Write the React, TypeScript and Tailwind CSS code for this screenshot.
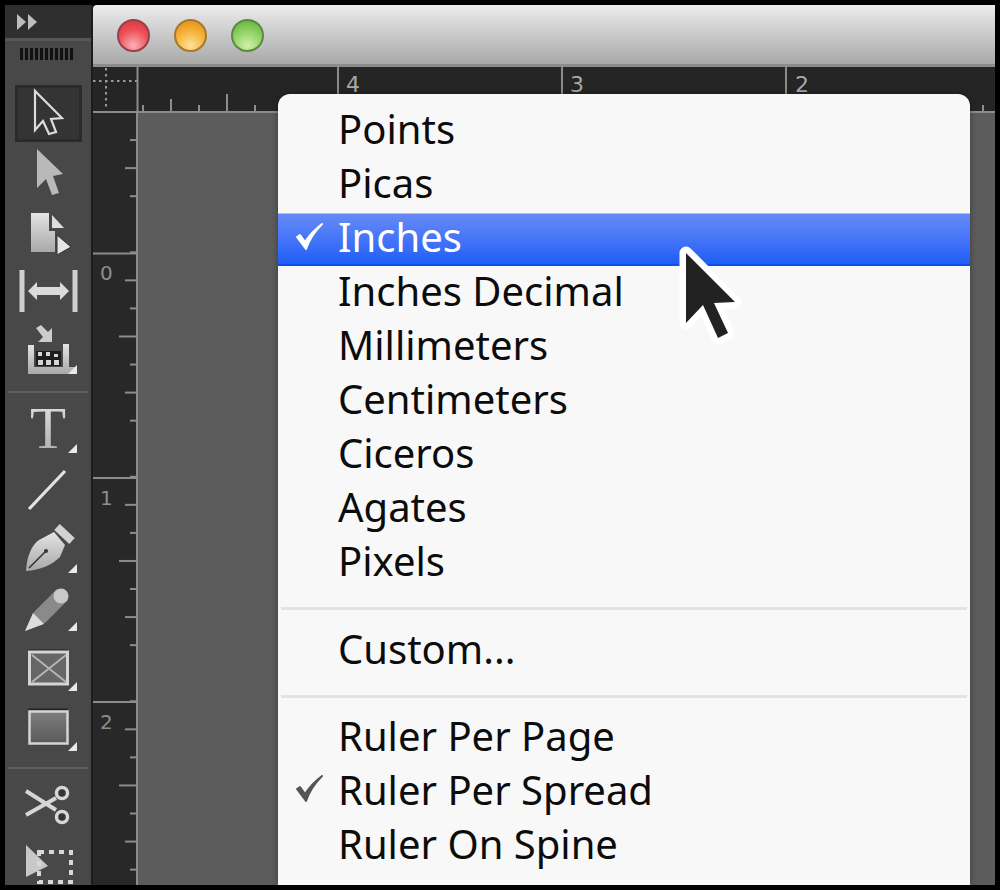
import React from "react";

const lightFill = "url(#tool)";

function Defs() {
  return (
    <svg width="0" height="0" className="absolute">
      <defs>
        <linearGradient id="tool" x1="0" y1="0" x2="0" y2="1">
          <stop offset="0" stopColor="#e4e4e4" />
          <stop offset="1" stopColor="#a8a8a8" />
        </linearGradient>
        <linearGradient id="rectfill" x1="0" y1="0" x2="0" y2="1">
          <stop offset="0" stopColor="#7e7e7e" />
          <stop offset="1" stopColor="#5a5a5a" />
        </linearGradient>
      </defs>
    </svg>
  );
}

function Corner({ x, y }: { x: number; y: number }) {
  return <path d={`M${x} ${y - 9}V${y}H${x - 9}Z`} fill="#e8e8e8" />;
}

function Tool({ top, h, children, selected }: { top: number; h: number; children: React.ReactNode; selected?: boolean }) {
  return (
    <div className={`relative shrink-0 ${selected ? "mx-[10px] w-[67px] bg-[#343434] border-[3px] border-[#2b2b2b]" : "w-[86px]"}`} style={{ height: h }}>
      <svg
        width={86}
        height={h}
        viewBox={`5 ${top} 86 ${h}`}
        className={selected ? "absolute left-[-13px] top-[-3px] overflow-visible" : "block overflow-visible"}
      >
        {children}
      </svg>
    </div>
  );
}

function Separator({ className }: { className: string }) {
  return <div className={`mx-[3px] h-[2px] bg-[#5e5e5e] shrink-0 ${className}`} />;
}

function Toolbar() {
  return (
    <div className="w-[86px] shrink-0 bg-[#484848] flex flex-col overflow-hidden">
      <div className="h-[33px] shrink-0 bg-[#2f2f2f] border-b-[3px] border-[#565656] flex items-center pl-[12px] box-content">
        <svg width="22" height="16" viewBox="0 0 22 16">
          <path d="M0 0L9 8L0 16Z M11 0L20 8L11 16Z" fill="#bdbdbd" />
        </svg>
      </div>
      <div className="h-[44px] shrink-0 flex items-start pl-[15px] pt-[7px] gap-[2px]">
        {Array.from({ length: 11 }).map((_, i) => (
          <div key={i} className="w-[3px] h-[12px] bg-[#111111]" />
        ))}
      </div>

      <Tool top={85} h={57} selected>
        <path d="M35 91L35 130L43 121L49 134L56 132L51 119L62 118Z" fill="#343434" stroke="#dcdcdc" strokeWidth="2.2" />
      </Tool>
      <div className="h-[1px] shrink-0" />
      <Tool top={143} h={59}>
        <path d="M37 149L37 188L46 179L52 195L59 193L53 176L63 174Z" fill="#b9b9b9" />
      </Tool>
      <Tool top={202} h={59}>
        <path d="M31 213H49V231H55V252H31Z" fill={lightFill} />
        <path d="M52 215L64 228H52Z" fill="#dddddd" />
        <path d="M57 235L71 247L57 255Z" fill="#e4e4e4" stroke="#333333" strokeWidth="1" />
      </Tool>
      <Tool top={261} h={59}>
        <path d="M22 270V312M75 270V312" stroke="#cfcfcf" strokeWidth="5" />
        <path d="M28 291L37 282V287H60V282L69 291L60 300V295H37V300Z" fill="#dadada" />
      </Tool>
      <Tool top={320} h={59}>
        <path d="M36 328L41 325L48 332L52 328V342H38L43 337Z" fill="#cccccc" />
        <path d="M28 345H34V367H63V344H69V367H77V374H28Z" fill={lightFill} />
        <path d="M36 351H61V366H36Z" fill="#1d1d1d" />
        <path d="M38 352h4v4h-4zM46 352h4v4h-4zM38 360h5v5h-5zM46 360h5v5h-5zM54 360h5v5h-5zM54 354h4v3h-4z" fill="#d5d5d5" />
        <Corner x={77} y={374} />
      </Tool>

      <Separator className="mt-[12px] mb-[6px]" />

      <Tool top={400} h={60}>
        <text x="48" y="449" textAnchor="middle" fontSize="59" fontFamily="'Liberation Serif', serif" fill={lightFill}>T</text>
        <Corner x={77} y={454} />
      </Tool>
      <Tool top={460} h={60}>
        <path d="M29 510L65 472" stroke="#e2e2e2" strokeWidth="3.2" />
      </Tool>
      <Tool top={520} h={60}>
        <path d="M26 572C27 556 32 546 39 541L54 533L65 546L60 558C52 566 40 571 26 572Z" fill={lightFill} />
        <path d="M57 528L72 542" stroke="#d2d2d2" strokeWidth="8" />
        <path d="M29 569L45 553" stroke="#333333" strokeWidth="1.6" />
        <circle cx="46" cy="552" r="2" fill="#333333" />
        <Corner x={77} y={574} />
      </Tool>
      <Tool top={580} h={60}>
        <path d="M25 632L34 613L57 590L68 601L45 624Z" fill="#8a8a8a" />
        <path d="M25 632L33 614L44 625Z" fill="#dddddd" />
        <circle cx="61" cy="597" r="7.5" fill="#c9c9c9" />
        <Corner x={77} y={632} />
      </Tool>
      <Tool top={640} h={60}>
        <path d="M28 651.5H68" stroke="#222222" strokeWidth="2" />
        <rect x="29.5" y="653" width="38" height="32" fill="#666666" stroke="#d4d4d4" strokeWidth="3" />
        <path d="M32 656L66 683M66 656L32 683" stroke="#b5b5b5" strokeWidth="2" />
        <Corner x={77} y={692} />
      </Tool>
      <Tool top={700} h={60}>
        <path d="M28 710.5H68" stroke="#222222" strokeWidth="2" />
        <rect x="29.5" y="712.5" width="38" height="32" fill="url(#rectfill)" stroke="#d4d4d4" strokeWidth="2.5" />
        <Corner x={77} y={752} />
      </Tool>

      <Separator className="mt-[8px] mb-[7px]" />

      <Tool top={778} h={60}>
        <path d="M26 793L56 812M26 817L56 800" stroke="#d6d6d6" strokeWidth="4" />
        <circle cx="62" cy="795" r="5.5" fill="#333333" stroke="#d6d6d6" strokeWidth="3.5" />
        <circle cx="62" cy="819" r="5.5" fill="#333333" stroke="#d6d6d6" strokeWidth="3.5" />
      </Tool>
      <Tool top={838} h={47}>
        <path d="M26 847L26 879L48 868Z" fill="#c8c8c8" />
        <path d="M39 854H71V884H39Z" fill="none" stroke="#d8d8d8" strokeWidth="4" strokeDasharray="5 5" />
      </Tool>
    </div>
  );
}

function TrafficLight({ className }: { className: string }) {
  return <div className={`w-[33px] h-[33px] rounded-full border-[2px] ${className}`} />;
}

function TitleBar() {
  return (
    <div className="h-[62px] shrink-0 rounded-tl-[4px] bg-gradient-to-b from-[#ececec] to-[#a9a9a9] border-b-[3px] border-[#8c8c8c] flex items-center gap-[24px] pl-[24px] pt-[1px]">
      <TrafficLight className="border-[#97404a] bg-[radial-gradient(circle_at_50%_85%,#fbb0b8_0%,#ee5058_55%,#d8333c_100%)]" />
      <TrafficLight className="border-[#a9772a] bg-[radial-gradient(circle_at_50%_85%,#fde29a_0%,#f4b033_55%,#dd8a1c_100%)]" />
      <TrafficLight className="border-[#5c8a3c] bg-[radial-gradient(circle_at_50%_85%,#d0f0a8_0%,#8cd062_55%,#5eae3a_100%)]" />
    </div>
  );
}

function HorizontalRuler() {
  const ticks: { x: number; y: number }[] = [];
  for (let i = 0; i < 31; i++) {
    const x = 143 + i * 28.0;
    const m = i % 8;
    if (m === 7) continue;
    const y = m % 2 === 0 ? 105 : m === 3 ? 94 : 99;
    ticks.push({ x, y });
  }
  return (
    <svg width={902} height={46} viewBox="93 67 902 46" className="block shrink-0 bg-[#252525]">
      <path d="M106 68V110M93 81H137" stroke="#9a9a9a" strokeWidth="2" strokeDasharray="2.5 3.5" fill="none" />
      <path d="M93 112H995" stroke="#8c8c8c" strokeWidth="2" />
      <path d="M137.5 67V112" stroke="#8c8c8c" strokeWidth="2" />
      {ticks.map((t, i) => (
        <path key={i} d={`M${t.x} ${t.y}V112`} stroke="#8c8c8c" strokeWidth="2" />
      ))}
      {[338, 562, 786].map((x) => (
        <path key={x} d={`M${x} 67V112`} stroke="#8c8c8c" strokeWidth="2" />
      ))}
      {[[346, "4"], [570, "3"], [795, "2"]].map(([x, t]) => (
        <text key={t as string} x={x as number} y="92" fontSize="22" fontFamily="'DejaVu Sans', sans-serif" fill="#a8a8a8">{t}</text>
      ))}
    </svg>
  );
}

function VerticalRuler() {
  const ticks: React.ReactNode[] = [];
  for (let i = 0; i < 28; i++) {
    const y = 112 + i * 28.06;
    const m = (i + 4) % 8;
    if (m === 0) continue;
    const x = m % 2 === 1 ? 130 : m === 6 || m === 2 ? 125 : 119;
    ticks.push(<path key={i} d={`M${x} ${y}H137`} stroke="#8c8c8c" strokeWidth="2" />);
  }
  return (
    <svg width={45} height={772} viewBox="93 113 45 772" className="block shrink-0 bg-[#282828]">
      <path d="M137 113V885" stroke="#8c8c8c" strokeWidth="2" />
      {ticks}
      {[253.5, 478, 702].map((y) => (
        <path key={y} d={`M93 ${y}H137`} stroke="#8c8c8c" strokeWidth="2" />
      ))}
      {[[280, "0"], [505, "1"], [729, "2"]].map(([y, t]) => (
        <text key={t as string} x="100" y={y as number} fontSize="20" fontFamily="'DejaVu Sans', sans-serif" fill="#8e8e8e">{t}</text>
      ))}
    </svg>
  );
}

function Check({ color, className }: { color: string; className: string }) {
  return (
    <svg width="32" height="32" viewBox="0 0 32 32" className={`absolute left-[16px] ${className}`}>
      <path d="M3 16L12 28C15 19 21 10 28 3C20 9 15 15 11 21L6 14Z" fill={color} stroke={color} strokeWidth="2" strokeLinejoin="round" />
    </svg>
  );
}

function Item({ label, checked, active }: { label: string; checked?: boolean; active?: boolean }) {
  return (
    <div
      className={`relative flex items-center text-[40px] leading-none pl-[60px] ${
        active
          ? "mt-[2px] mb-[-1px] h-[53px] pb-[4px] bg-gradient-to-b from-[#668af6] to-[#1e5df6] border-t border-t-[#aebdf2] border-b-2 border-b-[#0a50ee] text-white"
          : "h-[54px] pb-[2px] text-[#0c0c0c]"
      }`}
    >
      {checked && <Check color={active ? "#ffffff" : "#555555"} className={active ? "top-[7px]" : "top-[9px]"} />}
      {label}
    </div>
  );
}

function Menu() {
  return (
    <div className="absolute left-[185px] top-[89px] w-[692px] h-[791px] rounded-t-[12px] bg-[#f8f8f8] pt-[9px] shadow-[0_0_6px_rgba(0,0,0,0.35)] font-['Noto_Sans',sans-serif] overflow-hidden">
      <Item label="Points" />
      <Item label="Picas" />
      <Item label="Inches" checked active />
      <Item label="Inches Decimal" />
      <Item label="Millimeters" />
      <Item label="Centimeters" />
      <Item label="Ciceros" />
      <Item label="Agates" />
      <Item label="Pixels" />
      <div className="mx-[3px] mt-[18px] mb-[13px] h-[3px] bg-[#e3e3e3]" />
      <Item label="Custom..." />
      <div className="mx-[3px] mt-[18px] mb-[12px] h-[3px] bg-[#e3e3e3]" />
      <Item label="Ruler Per Page" />
      <Item label="Ruler Per Spread" checked />
      <Item label="Ruler On Spine" />
    </div>
  );
}

function Cursor() {
  return (
    <svg width="80" height="110" viewBox="670 240 80 110" className="absolute left-[577px] top-[235px]">
      <path d="M686 253L686 323L703 305L718 338L728 333L714 303L735 302Z" fill="#222222" stroke="#ffffff" strokeWidth="13" strokeLinejoin="round" paintOrder="stroke" />
    </svg>
  );
}

export default function App() {
  return (
    <div className="w-[1000px] h-[890px] bg-black p-[5px] flex overflow-hidden">
      <Defs />
      <Toolbar />
      <div className="w-[2px] shrink-0 bg-[#1c1c1c]" />
      <div className="relative w-[902px] flex flex-col overflow-hidden">
        <TitleBar />
        <HorizontalRuler />
        <div className="flex flex-1 min-h-0">
          <VerticalRuler />
          <div className="flex-1 bg-[#5c5c5c]" />
        </div>
        <Menu />
        <Cursor />
      </div>
    </div>
  );
}
